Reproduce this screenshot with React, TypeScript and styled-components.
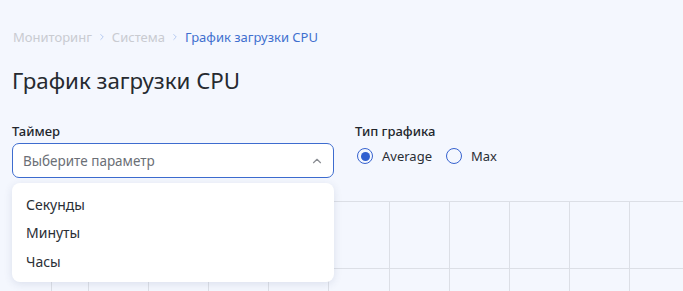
import React from "react";
import styled, { createGlobalStyle } from "styled-components";
import { ChevronRight, ChevronUp } from "lucide-react";

const GlobalStyle = createGlobalStyle`
  html, body {
    margin: 0;
    padding: 0;
    overflow: hidden;
    background: #f4f7fe;
    font-family: "Noto Sans", "Open Sans", sans-serif;
  }
`;

const Page = styled.div`
  padding: 28px 12px 0;
  display: flex;
  flex-direction: column;
`;

const Breadcrumbs = styled.nav`
  display: flex;
  align-items: center;
  gap: 5px;
  font-size: 13px;
  line-height: 18px;
  padding-left: 1px;
`;

const Crumb = styled.span<{ $active?: boolean }>`
  color: ${(p) => (p.$active ? "#3f6fcf" : "#c9cbd1")};
`;

const Sep = styled.span`
  display: flex;
  color: #a8c0ee;
`;

const Title = styled.h1`
  margin: 20px 0 0;
  font-size: 22.3px;
  font-weight: 400;
  line-height: 30px;
  color: #262a30;
`;

const Filters = styled.div`
  display: flex;
  gap: 21px;
  margin-top: 27px;
`;

const Field = styled.div<{ $width?: number }>`
  position: relative;
  display: flex;
  flex-direction: column;
  width: ${(p) => (p.$width ? `${p.$width}px` : "auto")};
`;

const Label = styled.label`
  font-size: 13px;
  font-weight: 500;
  line-height: 16px;
  color: #22262c;
  margin-bottom: 4px;
`;

const SelectBox = styled.div`
  height: 35px;
  box-sizing: border-box;
  border: 1px solid #3d6ccf;
  border-radius: 7px;
  background: #fff;
  display: flex;
  align-items: center;
  justify-content: space-between;
  padding: 0 9px 0 10px;
  font-size: 13.5px;
  color: #6b6f76;
`;

const Menu = styled.ul`
  position: absolute;
  top: 60px;
  left: 0;
  right: 0;
  margin: 0;
  padding: 7px 0 6px;
  list-style: none;
  background: #fff;
  border-radius: 8px;
  box-shadow: 0 2px 8px rgba(40, 60, 110, 0.12);
  z-index: 2;
`;

const MenuItem = styled.li`
  height: 28.5px;
  display: flex;
  align-items: center;
  padding-left: 14px;
  font-size: 14px;
  color: #2a2e35;
`;

const RadioRow = styled.div`
  display: flex;
  align-items: center;
  gap: 14px;
  height: 26px;
  margin-left: 2px;
`;

const RadioOption = styled.label`
  display: flex;
  align-items: center;
  gap: 9px;
  font-size: 13px;
  color: #2a2e35;
`;

const RadioCircle = styled.span<{ $checked?: boolean }>`
  width: 16px;
  height: 16px;
  box-sizing: border-box;
  border: 1.5px solid #3763cf;
  border-radius: 50%;
  display: flex;
  align-items: center;
  justify-content: center;
  &::after {
    content: "";
    width: 9px;
    height: 9px;
    border-radius: 50%;
    background: ${(p) => (p.$checked ? "#2f5fd0" : "transparent")};
  }
`;

const Chart = styled.div`
  margin: 23px -12px 0;
  height: 90px;
`;

const verticals = [51.5, ...Array.from({ length: 11 }, (_, i) => Math.round(88 + i * 60.1) + 0.5)];
const horizontals = [0.5, 67.5];

const GridChart = () => (
  <Chart>
    <svg width="683" height="90" viewBox="0 0 683 90">
      {horizontals.map((y) => (
        <line key={y} x1="51" x2="683" y1={y} y2={y} stroke="#dcdfe6" strokeWidth="1" />
      ))}
      {verticals.map((x) => (
        <line key={x} x1={x} x2={x} y1="0" y2="90" stroke="#dcdfe6" strokeWidth="1" />
      ))}
    </svg>
  </Chart>
);

const App = () => {
  return (
    <>
      <GlobalStyle />
      <Page>
        <Breadcrumbs>
          <Crumb>Мониторинг</Crumb>
          <Sep><ChevronRight size={10} strokeWidth={2} /></Sep>
          <Crumb>Система</Crumb>
          <Sep><ChevronRight size={10} strokeWidth={2} /></Sep>
          <Crumb $active>График загрузки CPU</Crumb>
        </Breadcrumbs>
        <Title>График загрузки CPU</Title>
        <Filters>
          <Field $width={322}>
            <Label>Таймер</Label>
            <SelectBox>
              <span>Выберите параметр</span>
              <ChevronUp size={14} strokeWidth={2} color="#8a8d93" />
            </SelectBox>
            <Menu>
              <MenuItem>Секунды</MenuItem>
              <MenuItem>Минуты</MenuItem>
              <MenuItem>Часы</MenuItem>
            </Menu>
          </Field>
          <Field>
            <Label>Тип графика</Label>
            <RadioRow>
              <RadioOption>
                <RadioCircle $checked />
                Average
              </RadioOption>
              <RadioOption>
                <RadioCircle />
                Max
              </RadioOption>
            </RadioRow>
          </Field>
        </Filters>
        <GridChart />
      </Page>
    </>
  );
};

export default App;
